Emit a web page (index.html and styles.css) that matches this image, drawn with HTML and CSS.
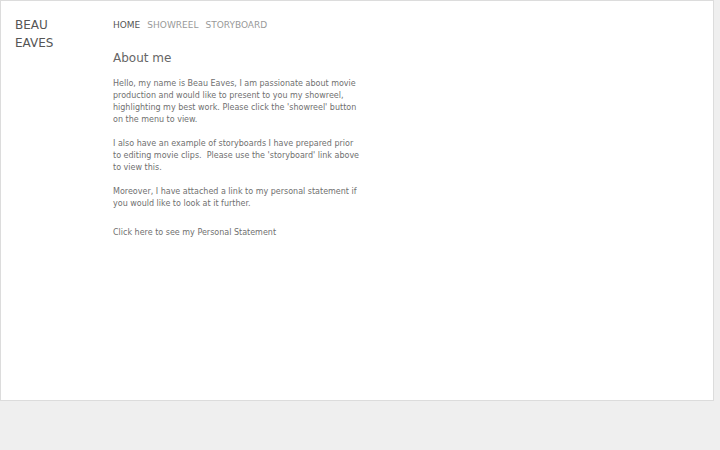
FILE: index.html
```html
<!DOCTYPE html>
<html>
<head>
<meta charset="utf-8">
<link rel="stylesheet" href="styles.css">
</head>
<body>
<div class="page">
  <div class="side">
    <div class="name">BEAU<br>EAVES</div>
  </div>
  <div class="main">
    <nav class="nav">
      <a class="nav-item active">HOME</a>
      <a class="nav-item">SHOWREEL</a>
      <a class="nav-item">STORYBOARD</a>
    </nav>
    <h1 class="title">About me</h1>
    <p class="text">Hello, my name is Beau Eaves, I am passionate about movie production and would like to present to you my showreel, highlighting my best work. Please click the 'showreel' button on the menu to view.</p>
    <p class="text">I also have an example of storyboards I have prepared prior to editing movie clips.&nbsp; Please use the 'storyboard' link above to view this.</p>
    <p class="text">Moreover, I have attached a link to my personal statement if you would like to look at it further.</p>
    <p class="text link">Click here to see my Personal Statement</p>
  </div>
</div>
</body>
</html>
```
FILE: styles.css
```css
html, body {
  margin: 0;
  padding: 0;
  background: #efefef;
  font-family: "DejaVu Sans", Verdana, sans-serif;
}
.page {
  width: 712px;
  height: 399px;
  background: #fff;
  border: 1px solid #dcdcdc;
  display: flex;
  box-sizing: content-box;
}
.side {
  width: 98px;
  padding: 15px 0 0 14px;
}
.name {
  font-size: 12px;
  line-height: 18px;
  color: #555;
}
.main {
  width: 248px;
  padding-top: 17px;
}
.nav {
  display: flex;
  gap: 7px;
  font-size: 9px;
  line-height: 14px;
}
.nav-item {
  color: #999;
}
.nav-item.active {
  color: #555;
}
.title {
  font-size: 12px;
  font-weight: normal;
  color: #666;
  margin: 17px 0 11px;
  line-height: 18px;
}
.text {
  font-size: 8px;
  line-height: 12px;
  color: #707070;
  margin: 0 0 12px;
}
.link {
  margin-top: 17px;
}
```
